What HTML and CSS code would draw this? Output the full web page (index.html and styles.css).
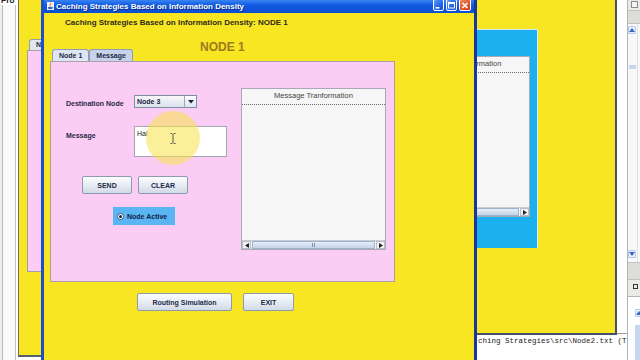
FILE: index.html
```html
<!DOCTYPE html>
<html lang="en">
<head>
<meta charset="utf-8">
<title>Caching Strategies Based on Information Density</title>
<link rel="stylesheet" href="styles.css">
</head>
<body>
<div class="screen">
  <div class="ide">
    <div class="ide-left"><span class="pro">Pro</span></div>
    <div class="ide-center">
      <div class="ide-editor"></div>
      <div class="ide-output">ching Strategies\src\Node2.txt (T</div>
    </div>
    <div class="ide-right">
      <div class="ir-top"><span class="ir-btn"></span><span class="ir-btn"></span></div>
      <div class="ir-bar"></div>
      <div class="ir-scroll">
        <div class="ir-track">
          <span class="ir-arrow"><svg width="6" height="4" viewBox="0 0 6 4"><path d="M0 4 L3 0 L6 4Z" fill="#3a6ac0"/></svg></span>
          <span class="ir-thumb"></span>
          <span class="ir-arrow"><svg width="6" height="4" viewBox="0 0 6 4"><path d="M0 0 L3 4 L6 0Z" fill="#3a6ac0"/></svg></span>
        </div>
        <div class="ir-marks"><i class="m1"></i><i class="m2"></i><i class="m3"></i><i class="m4"></i></div>
      </div>
      <div class="ir-bar two"></div>
      <div class="ir-ctrls">
        <svg width="5" height="5" viewBox="0 0 5 5"><rect x="0.5" y="0.5" width="4" height="4" fill="none" stroke="#333"/></svg>
        <svg width="5" height="5" viewBox="0 0 5 5"><path d="M0.5 0.5 L4.5 4.5 M4.5 0.5 L0.5 4.5" stroke="#333" stroke-width="1.2"/></svg>
      </div>
      <div class="ir-out">
        <div class="ir-vs">
          <span class="ir-arrow"><svg width="6" height="4" viewBox="0 0 6 4"><path d="M0 4 L3 0 L6 4Z" fill="#3a6ac0"/></svg></span>
          <span class="ir-vthumb"></span>
        </div>
      </div>
    </div>
  </div>

  <div class="win back-left">
    <div class="bl-tabs"><span class="tab active">Node 1</span><span class="tab">Message</span></div>
    <div class="bl-panel"></div>
  </div>

  <div class="win back-right">
    <div class="br-blue">
      <div class="br-area">
        <div class="br-head">Message Tranformation</div>
        <div class="br-body"></div>
        <div class="hscroll">
          <span class="sb-arrow"><svg width="4" height="5" viewBox="0 0 4 5"><path d="M4 0 L0 2.5 L4 5Z" fill="#222"/></svg></span>
          <span class="sb-track"><span class="grip"></span></span>
          <span class="sb-arrow"><svg width="4" height="5" viewBox="0 0 4 5"><path d="M0 0 L4 2.5 L0 5Z" fill="#222"/></svg></span>
        </div>
      </div>
    </div>
  </div>

  <div class="win main">
    <div class="titlebar">
      <svg class="app-icon" width="7" height="8" viewBox="0 0 7 8">
        <rect x="0" y="0" width="7" height="8" fill="#f4f4f4"/>
        <path d="M3 0.5 Q4.5 1.5 3 3 Q2 4 3.5 4.5" stroke="#d8392a" stroke-width="0.8" fill="none"/>
        <path d="M1 5 H5.5 V6.5 Q3.2 8 1 6.5Z" fill="#3b63b8"/>
        <path d="M5.5 5.3 Q6.8 5.6 5.5 6.4" stroke="#3b63b8" stroke-width="0.6" fill="none"/>
      </svg>
      <span class="title">Caching Strategies Based on Information Density</span>
      <div class="ctrls">
        <span class="wb"><svg width="11" height="11" viewBox="0 0 11 11"><rect x="2.5" y="7" width="4" height="1.6" fill="#fff"/></svg></span>
        <span class="wb"><svg width="11" height="11" viewBox="0 0 11 11"><rect x="2.5" y="2.5" width="6" height="5.5" fill="none" stroke="#fff" stroke-width="1"/><rect x="2.5" y="2.5" width="6" height="1.5" fill="#fff"/></svg></span>
        <span class="wb close"><svg width="12" height="11" viewBox="0 0 12 11"><path d="M3.5 3 L8.5 8 M8.5 3 L3.5 8" stroke="#fff" stroke-width="1.6"/></svg></span>
      </div>
    </div>
    <div class="client">
      <div class="heading">Caching Strategies Based on Information Density: NODE 1</div>
      <div class="node-title">NODE 1</div>
      <div class="tabs"><span class="tab active">Node 1</span><span class="tab">Message</span></div>
      <div class="tabpanel">
        <div class="form">
          <div class="grid">
            <span class="lbl dest">Destination Node</span>
            <div class="combo">
              <span class="val">Node 3</span>
              <span class="arrow"><svg width="6" height="4" viewBox="0 0 6 4"><path d="M0 0 L6 0 L3 3.5Z" fill="#1a2440"/></svg></span>
            </div>
            <span class="lbl msg">Message</span>
            <div class="textarea">Hai</div>
          </div>
          <div class="btnrow">
            <button class="btn small">SEND</button>
            <button class="btn small">CLEAR</button>
          </div>
          <div class="radio-row">
            <span class="radio"><span class="rb"><span class="dot"></span></span>Node Active</span>
          </div>
        </div>
        <div class="transform">
          <div class="t-head">Message Tranformation</div>
          <div class="t-body"></div>
          <div class="hscroll">
            <span class="sb-arrow"><svg width="4" height="5" viewBox="0 0 4 5"><path d="M4 0 L0 2.5 L4 5Z" fill="#222"/></svg></span>
            <span class="sb-track"><span class="grip"></span></span>
            <span class="sb-arrow"><svg width="4" height="5" viewBox="0 0 4 5"><path d="M0 0 L4 2.5 L0 5Z" fill="#222"/></svg></span>
          </div>
        </div>
      </div>
      <div class="bottom">
        <button class="btn routing">Routing Simulation</button>
        <button class="btn exit">EXIT</button>
      </div>
    </div>
  </div>

  <div class="glow"></div>
  <svg class="ibeam" width="6" height="11" viewBox="0 0 6 11">
    <path d="M0.5 0.5 H2.3 M3.7 0.5 H5.5 M3 1 V10 M0.5 10.5 H2.3 M3.7 10.5 H5.5" stroke="#555" stroke-width="1" fill="none"/>
  </svg>
</div>
</body>
</html>
```

FILE: styles.css
```css
* { box-sizing: border-box; margin: 0; padding: 0; }
html, body { width: 640px; height: 360px; overflow: hidden; }
body { font-family: "Liberation Sans", Arial, sans-serif; background: #fff; }

.screen { position: relative; width: 640px; height: 360px; overflow: hidden; }

/* IDE behind the windows */
.ide { display: grid; grid-template-columns: 18px 1fr 23px; height: 360px; background: #fff; }
.ide-left {
  background: linear-gradient(90deg, #eeeeee 0 2px, #b8b8b8 2px 3px, #fafafa 3px 15px, #c2c2c2 15px 16px, #fff 16px);
  overflow: hidden;
}
.pro { display: block; margin-top: -4px; padding-left: 1px; font: bold 8px "Liberation Sans", sans-serif; color: #222; background: #fff; width: 16px; }
.ide-center { display: flex; flex-direction: column; }
.ide-editor { flex: 1; background: #fff; }
.ide-output {
  height: 27px; border-top: 1px solid #9a9a9a; background: #fff;
  padding: 3px 0 0 460px; font: 7.5px "Liberation Mono", monospace; color: #222;
  white-space: nowrap; overflow: hidden;
}
.ide-right { display: flex; flex-direction: column; background: #eceae6; border-left: 1px solid #b4b4b4; overflow: hidden; }
.ir-top { height: 10px; display: flex; gap: 2px; padding: 1px 3px; }
.ir-btn { width: 7px; height: 7px; border: 1px solid #8a8a8a; background: #f4f4f4; }
.ir-bar { height: 14px; background: #dedcd8; border-top: 1px solid #c2c2c2; border-bottom: 1px solid #c2c2c2; }
.ir-bar.two { height: 18px; }
.ir-scroll { height: 238px; display: flex; background: #f8f8f8; }
.ir-track { width: 10px; display: flex; flex-direction: column; justify-content: space-between; align-items: center; padding: 2px 0 4px; border-right: 1px solid #e0e0e0; }
.ir-arrow { width: 8px; height: 8px; display: flex; align-items: center; justify-content: center; background: #e8effa; border: 1px solid #b6c8e4; border-radius: 1px; }
.ir-thumb { width: 7px; height: 4px; background: #c8d6ec; margin-bottom: 150px; }
.ir-marks { flex: 1; }
.ir-marks i { display: block; width: 6px; height: 2px; background: #eba23a; margin-left: 4px; }
.ir-marks .m1 { margin-top: 4px; }
.ir-marks .m2 { margin-top: 8px; }
.ir-marks .m3 { margin-top: 117px; }
.ir-marks .m4 { margin-top: 70px; }
.ir-ctrls { height: 16px; display: flex; gap: 3px; justify-content: flex-end; align-items: center; padding: 0 4px 4px 0; }
.ir-out { flex: 1; background: #fff; border-top: 1px solid #b4b4b4; display: flex; justify-content: flex-end; padding: 12px 6px 0 0; }
.ir-vs { width: 9px; display: flex; flex-direction: column; align-items: center; gap: 8px; }
.ir-vthumb { width: 8px; flex: 1; background: #c4d6f0; }

/* generic windows */
.win { position: absolute; background: #f8e622; }

.back-left {
  left: 18px; top: 0; width: 300px; height: 357px;
  border-left: 1px solid #6a6a6a; border-bottom: 2px solid #55606e;
  padding-top: 39px;
}
.bl-tabs { margin-left: 10px; height: 11px; display: flex; }
.bl-tabs .tab { height: 11px; line-height: 10px; }
.bl-panel { margin-left: 8px; height: 222px; background: #fbcdf5; border: 1px solid #a3a0a5; }

.back-right {
  left: 300px; top: 0; width: 317px; height: 335px;
  border-right: 2px solid #46506a; border-bottom: 2px solid #46506a;
  padding: 29px 0 0 86px;
}
.br-blue {
  width: 152px; height: 219px; background: #1db0ef;
  border-top: 1px solid #d4ebfa; border-right: 1px solid #d4ebfa;
  padding: 26px 7px 0 8px;
}
.br-area { width: 136px; height: 161px; background: #f6f6f6; border: 1px solid #a8aab8; display: flex; flex-direction: column; }
.br-head, .t-head {
  height: 16px; text-align: center; font: 7.5px "Liberation Sans", sans-serif; color: #444;
  line-height: 13px; border-bottom: 1px dotted #6c6c6c; flex: none;
}
.br-body, .t-body { flex: 1; }

/* main window */
.main {
  left: 41px; top: 0; width: 436px; height: 362px;
  border-left: 3px solid #1f4fc6; border-right: 3px solid #1a389c;
}
.titlebar {
  height: 13px; display: flex; align-items: center; padding-left: 3px;
  background: linear-gradient(#3a84f2, #0f5be2 40%, #0a4dd2);
}
.app-icon { flex: none; margin-top: -1px; }
.title {
  margin-left: 2px; font: bold 8px "Liberation Sans", sans-serif; color: #fff;
  text-shadow: 1px 1px 0 #0a2c8a; white-space: nowrap;
}
.ctrls { margin-left: auto; align-self: flex-start; margin-top: -1px; padding-right: 3px; display: flex; gap: 2px; }
.wb {
  width: 11px; height: 12px; border: 1px solid #fff; border-radius: 2px;
  background: linear-gradient(135deg, #5a9cf8, #2462e6 60%, #1a50d0);
  display: flex; align-items: center; justify-content: center; overflow: hidden;
}
.wb svg { flex: none; }
.wb.close { width: 12px; background: linear-gradient(135deg, #f08a60, #e2522a 60%, #c83e1c); }

.client { padding-top: 5px; }
.heading { padding-left: 21px; font: bold 8px "Liberation Sans", sans-serif; line-height: 9px; color: #2e2b1c; white-space: nowrap; }
.node-title { margin-top: 13px; padding-left: 156px; font: bold 12px "Liberation Sans", sans-serif; line-height: 14px; color: #9b7a20; }
.tabs { margin: -5px 0 0 8px; height: 12px; display: flex; }
.tab {
  height: 12px; padding: 0 6px; border: 1px solid #8f9db6; border-bottom: none;
  border-radius: 3px 3px 0 0; background: #c8d3ea;
  font: bold 7px "Liberation Sans", sans-serif; line-height: 11px; color: #1d2a48; white-space: nowrap;
}
.tab.active { background: #dfe6f2; }

.tabpanel {
  margin-left: 6px; width: 345px; height: 221px; background: #fbcdf5;
  border: 1px solid #a7a0a6; display: flex; align-items: flex-start;
}
.form { width: 190px; padding: 33px 0 0 15px; }
.grid { display: grid; grid-template-columns: 68px 93px; row-gap: 18px; }
.lbl { font: bold 7px "Liberation Sans", sans-serif; line-height: 9px; color: #2a2a48; white-space: nowrap; }
.lbl.dest { align-self: end; }
.lbl.msg { align-self: start; margin-top: 5px; }
.combo {
  width: 63px; height: 13px; display: flex; border: 1px solid #7f8ea8;
  background: linear-gradient(#f6f7fa, #dde3ec);
}
.combo .val { flex: 1; padding-left: 2px; font: bold 7px "Liberation Sans", sans-serif; line-height: 11px; color: #1a2440; }
.combo .arrow {
  width: 12px; border-left: 1px solid #9aa8bc; background: linear-gradient(#ffffff, #dbe3ee);
  display: flex; align-items: center; justify-content: center;
}
.textarea {
  width: 93px; height: 31px; background: #fff; border: 1px solid #a2a6b0;
  padding: 2px 2px; font: 7px "Liberation Sans", sans-serif; line-height: 9px; color: #222;
}
.btnrow { margin: 19px 0 0 16px; display: flex; gap: 6px; }
.btn {
  height: 18px; border: 1px solid #8c9ab2; border-radius: 2px;
  background: linear-gradient(#fcfdfe, #e8edf4 50%, #d2dae6);
  font: bold 7px "Liberation Sans", sans-serif; color: #1e2b48; cursor: default;
}
.btn.small { width: 50px; }
.radio-row { margin: 13px 0 0 47px; }
.radio {
  width: 62px; height: 18px; display: flex; align-items: center; gap: 3px; padding-left: 4px;
  background: #5ab5f2; font: bold 7px "Liberation Sans", sans-serif; color: #0f1f48; white-space: nowrap;
}
.rb {
  width: 7px; height: 7px; border-radius: 50%; background: #fff; border: 1px solid #3d5a88;
  display: flex; align-items: center; justify-content: center;
}
.rb .dot { width: 3px; height: 3px; border-radius: 50%; background: #1a2440; }

.transform {
  margin-top: 26px; width: 145px; height: 162px; background: #f6f6f6;
  border: 1px solid #a8a8b8; display: flex; flex-direction: column;
}
.hscroll { height: 9px; display: flex; flex: none; border-top: 1px solid #c8ccd4; }
.sb-arrow { width: 9px; height: 8px; display: flex; align-items: center; justify-content: center; background: #f2f2f2; border: 1px solid #b8bcc6; }
.sb-track {
  flex: 1; margin: 0 1px; background: linear-gradient(#e6eef8, #c4d4e8); border: 1px solid #9fb2cc;
  display: flex; align-items: center; justify-content: center;
}
.grip { width: 3px; height: 4px; border-left: 1px solid #7f90aa; border-right: 1px solid #7f90aa; }

.bottom { margin: 11px 0 0 93px; display: flex; gap: 11px; }
.btn.routing { width: 95px; }
.btn.exit { width: 51px; }

/* cursor highlight overlay */
.glow {
  position: absolute; left: 146px; top: 111px; width: 54px; height: 54px; border-radius: 50%;
  background: rgba(250, 226, 70, 0.55);
}
.ibeam { position: absolute; left: 170px; top: 133px; }
```
